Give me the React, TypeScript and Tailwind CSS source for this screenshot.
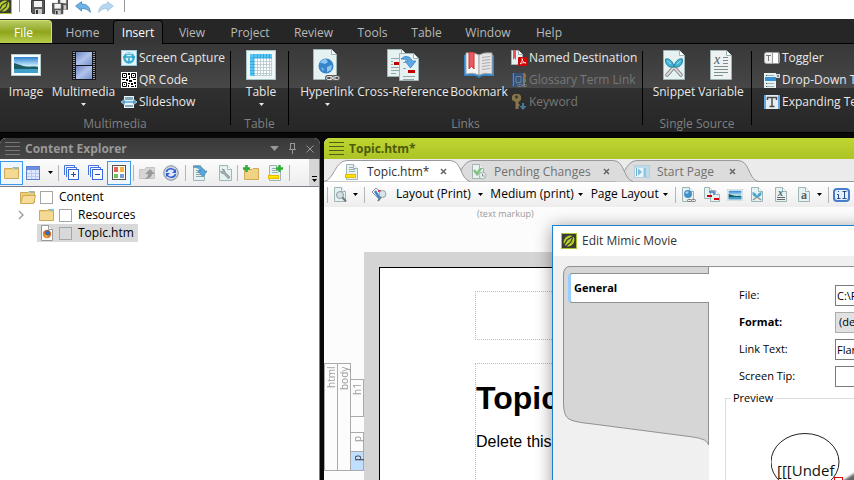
import React from "react";

type IconProps = { className?: string };

function Svg({ w, h, className = "", children }: { w: number; h: number; className?: string; children: React.ReactNode }) {
  return (
    <svg width={w} height={h} viewBox={`0 0 ${w} ${h}`} className={`shrink-0 ${className}`} aria-hidden="true">
      {children}
    </svg>
  );
}

/* ---------- shared shapes ---------- */

function Sheet({ w, h, fold = 4, fill = "#e6f1f1", stroke = "#9fb4b4" }: { w: number; h: number; fold?: number; fill?: string; stroke?: string }) {
  return (
    <>
      <path d={`M.5 .5H${w - fold - 0.5}L${w - 0.5} ${fold + 0.5}V${h - 0.5}H.5Z`} fill={fill} stroke={stroke} />
      <path d={`M${w - fold - 0.5} .5V${fold + 0.5}H${w - 0.5}`} fill="#fff" stroke={stroke} />
    </>
  );
}

function Caret({ className = "" }: IconProps) {
  return (
    <Svg w={7} h={4} className={className}>
      <path d="M0 0H7L3.500 4Z" fill="currentColor" />
    </Svg>
  );
}

function AppLogo({ className }: IconProps) {
  return (
    <Svg w={16} h={16} className={className}>
      <rect x=".5" y=".5" width="15" height="15" fill="#3c3c34" stroke="#a9c42c" />
      <ellipse cx="8" cy="8" rx="6" ry="4.800" transform="rotate(-45 8 8)" fill="#b6d02c" />
      <path d="M2 14L6 7L14 2" stroke="#3c3c34" strokeWidth="1.300" fill="none" />
      <path d="M4 14L10 9L11.500 4.500" stroke="#3c3c34" strokeWidth="1.200" fill="none" />
    </Svg>
  );
}

function Floppy() {
  return (
    <>
      <path d="M.5 .5H13.500V13.500H1.500L.5 12.500Z" fill="#5a5a5a" stroke="#383838" />
      <rect x="3" y="1" width="8" height="6" fill="#f1f1f1" />
      <rect x="4" y="9" width="7" height="5" fill="#c9c9c9" />
      <rect x="5" y="10" width="2" height="4" fill="#333" />
    </>
  );
}

const SaveIcon = () => <Svg w={14} h={14}><Floppy /></Svg>;
const SaveAllIcon = () => (
  <Svg w={16} h={16}>
    <g transform="translate(6 -2) scale(.75 .9)"><Floppy /></g>
    <g transform="translate(0 4) scale(.8)"><Floppy /></g>
  </Svg>
);
const UndoIcon = ({ className }: IconProps) => (
  <Svg w={16} h={12} className={className}>
    <path d="M.7 5L6.500 .7V3C12 3 15 6 15.300 11.400C13 8.500 10.500 7.500 6.500 7.500V10Z" fill="#6fb3e6" stroke="#3f83bd" strokeWidth=".8" />
  </Svg>
);
const RedoIcon = () => <UndoIcon className="-scale-x-100 opacity-50" />;

/* ---------- ribbon icons ---------- */

const PictureIcon = ({ w = 30, h = 22 }: { w?: number; h?: number }) => (
  <svg width={w} height={h} viewBox="0 0 30 22" aria-hidden="true" className="shrink-0">
    <defs>
      <linearGradient id="sky" x1="0" y1="0" x2="0" y2="1">
        <stop offset="0" stopColor="#2b7fd0" /><stop offset=".55" stopColor="#c8ecfa" /><stop offset="1" stopColor="#1766a8" />
      </linearGradient>
    </defs>
    <rect x=".5" y=".5" width="29" height="21" fill="#f8fcfc" stroke="#b4cccc" />
    <rect x="3" y="3" width="24" height="16" fill="url(#sky)" />
    <path d="M3 9C7 10 12 12 15 12.500C20 13 23 12 27 13V15H3Z" fill="#1d5c60" />
    <path d="M3 15H27V19H3Z" fill="#3fa0cc" />
  </svg>
);
const FilmIcon = () => (
  <Svg w={24} h={29}>
    <defs>
      <linearGradient id="film" x1="0" y1="0" x2="1" y2="1">
        <stop offset="0" stopColor="#6a86c4" /><stop offset=".5" stopColor="#b2c3ea" /><stop offset="1" stopColor="#7391d0" />
      </linearGradient>
    </defs>
    <rect width="24" height="29" fill="#15171c" />
    <rect x="4" y="1" width="16" height="13" fill="url(#film)" />
    <rect x="4" y="15" width="16" height="13" fill="url(#film)" />
    <path d="M2 1V29M22 1V29" stroke="#c5c5c5" strokeWidth="1.500" strokeDasharray="1 1" />
  </Svg>
);
const CaptureIcon = () => (
  <Svg w={16} h={16}>
    <rect x=".5" y=".5" width="15" height="15" fill="#e3f5fa" stroke="#9acbe0" />
    <circle cx="8" cy="8" r="4.500" fill="none" stroke="#39afd4" strokeWidth="2.500" />
    <path d="M2 7H14M8 8V12" stroke="#2aa0cb" strokeWidth="1.500" />
    <path d="M5 4Q8 2 11 4" stroke="#d1f0f8" fill="none" />
  </Svg>
);
const QrIcon = () => (
  <Svg w={16} h={16}>
    <rect width="16" height="16" fill="#fff" />
    <path d="M1.500 1.500H5.500V5.500H1.500ZM10.500 1.500H14.500V5.500H10.500ZM1.500 10.500H5.500V14.500H1.500Z" fill="none" stroke="#000" />
    <path d="M3 3h1v1H3zM12 3h1v1h-1zM3 12h1v1H3zM7 1h2v2H7zM8 4h1v3H8zM1 7h3v1H1zM5 7h2v2H5zM8 8h3v2H8zM12 7h3v1h-3zM7 11h2v1H7zM10 11h2v2h-2zM13 10h2v2h-2zM7 13h1v2H7zM10 14h3v1h-3zM14 13h1v2h-1z" fill="#000" />
  </Svg>
);
const SlideshowIcon = () => (
  <Svg w={16} h={12}>
    <rect x="3" y="0" width="10" height="12" fill="#eef6f8" />
    <path d="M4 1h8v3H4zM4 9h8v2H4z" fill="#81a8bb" />
    <path d="M0 6L4 3V5H12V3L16 6L12 9V7H4V9Z" fill="#4e9ad0" stroke="#d6eef8" strokeWidth=".7" />
  </Svg>
);
const TableIcon = () => (
  <Svg w={30} h={30}>
    <rect x=".5" y=".5" width="29" height="29" fill="#eef7f7" stroke="#a9c4c4" />
    <path d="M4 4H26V8H8V26H4Z" fill="#58c6f0" />
    <path d="M8 8H26V26H8Z" fill="#fff" />
    <path d="M11.500 8V26M14.500 8V26M17.500 8V26M20.500 8V26M23.500 8V26M25.500 8V26M8 11.500H26M8 14.500H26M8 17.500H26M8 20.500H26M8 23.500H26M8 25.500H26" stroke="#bdcfd4" />
    <path d="M4 8H26M8 4V26" stroke="#32abe0" />
    <path d="M11.500 4V8M14.500 4V8M17.500 4V8M20.500 4V8M23.500 4V8M4 11.500H8M4 14.500H8M4 17.500H8M4 20.500H8M4 23.500H8" stroke="#2fa8de" />
  </Svg>
);
const HyperlinkIcon = () => (
  <Svg w={28} h={32}>
    <Sheet w={24} h={31} fold={5} />
    <circle cx="13" cy="17" r="7.500" fill="#3784c9" />
    <path d="M7 14Q9 10 13 10L15 13L12 15L9 14ZM14 18L19 16L18 21L14 23ZM8 18L11 20L10 22Z" fill="#8cc8f0" />
    <g fill="none" stroke="#555" strokeWidth="3"><rect x="13.500" y="27.500" width="6" height="3" rx="1.500" /><rect x="20" y="27.500" width="6" height="3" rx="1.500" /></g>
    <g fill="none" stroke="#ddd"><rect x="13.500" y="27.500" width="6" height="3" rx="1.500" /><rect x="20" y="27.500" width="6" height="3" rx="1.500" /><path d="M17 29H23" /></g>
  </Svg>
);
const CrossRefIcon = () => (
  <Svg w={32} h={32}>
    <Sheet w={20} h={28} fold={5} />
    <path d="M4 9.500H15M4 12.500H6M4 15.500H6M4 18.500H16M4 21.500H16M4 24.500H9" stroke="#95a9ad" />
    <rect x="7" y="13" width="9" height="3" fill="#c00000" />
    <g transform="translate(12 4)"><Sheet w={20} h={28} fold={5} /><path d="M4 9.500H9M4 15.500H7M4 23.500H16M4 26.500H15" stroke="#95a9ad" /><rect x="9" y="17" width="7" height="3" fill="#c00000" /></g>
    <path d="M14 10Q17 6 22 8Q25 10 25 12H29L23.500 19L18 12H21Q21 10 14 10Z" fill="#5ca9e6" stroke="#347cba" strokeWidth=".7" />
  </Svg>
);
const BookIcon = () => (
  <Svg w={30} h={26}>
    <path d="M0 3H14L15 4L16 3H30V24H18L15 26L12 24H0Z" fill="#3684c8" />
    <path d="M2 1Q10 0 15 3V23Q9 20 2 22Z" fill="#f4f4f4" stroke="#aaa" />
    <path d="M28 1Q20 0 15 3V23Q21 20 28 22Z" fill="#e5e5e5" stroke="#aaa" />
    <path d="M18 5.500L26 4.500M18 8.500L26 7.500M18 11.500L26 10.500M18 14.500L26 13.500M18 17.500L26 16.500" stroke="#aaa" />
    <path d="M5 0H10V17L7.500 14L5 17Z" fill="#e85a60" stroke="#c7343b" />
  </Svg>
);
const NamedIcon = () => (
  <Svg w={16} h={16}>
    <Sheet w={12} h={15} />
    <path d="M2 0H5V10L3.500 8L2 10Z" fill="#e75257" />
    <rect x="7" y="7" width="9" height="9" rx="1" fill="#cf0505" />
    <path d="M9 14C11 12 12 9 11 8.500C11 11 13 13 15 13C13 12 11 13 9 14Z" fill="none" stroke="#fff" strokeWidth=".8" />
  </Svg>
);
const GlossaryIcon = () => (
  <Svg w={16} h={16} className="opacity-70">
    <rect x="2" y="1" width="12" height="13" fill="#99917a" />
    <rect x="11" y="2" width="4" height="4" fill="#c08035" /><rect x="11" y="7" width="4" height="3" fill="#78a26b" />
    <rect x="1" y="1" width="11" height="14" fill="#31598f" />
    <path d="M2.500 1V14M5 4.500H10V10.500H5Z" fill="none" stroke="#829cc3" />
    <g fill="none" stroke="#9a9a9a"><rect x="6.500" y="12.500" width="4" height="2" rx="1" /><rect x="11.500" y="12.500" width="4" height="2" rx="1" /></g>
  </Svg>
);
const KeyIcon = () => (
  <Svg w={16} h={16} className="opacity-75">
    <path d="M3 0H8L10 2V6L7.500 8V10H8.500V12H7.500V15H4.500V8L1 6V2Z" fill="#a68c55" />
    <circle cx="5.500" cy="3" r="1.400" fill="#343434" />
    <path d="M11 9H13V12H15.500L12 16L8.500 12H11Z" fill="#4a94c4" />
  </Svg>
);
const SnippetIcon = () => (
  <Svg w={22} h={30}>
    <Sheet w={22} h={30} fold={5} />
    <path d="M4 25L12 16M18 25L10 16" stroke="#777" strokeWidth="3.500" strokeLinecap="round" />
    <path d="M4 25L12 16M18 25L10 16" stroke="#d9d9d9" strokeWidth="2" strokeLinecap="round" />
    <path d="M11 17C6 18 2 15 2.500 9C6 8 10 11 11 17ZM11 17C16 18 20 15 19.500 9C16 8 12 11 11 17Z" fill="#41b5d9" stroke="#2b819b" />
    <path d="M4.500 11L8 14M17.500 11L14 14" stroke="#a5e2f2" />
  </Svg>
);
const VariableIcon = () => (
  <Svg w={22} h={30}>
    <Sheet w={22} h={30} fold={5} fill="#f0f1f1" />
    <path d="M4 16.500H18M4 19.500H18M4 22.500H18M4 25.500H13M13 7.500H18M13 10.500H18M13 13.500H18" stroke="#789090" />
    <text x="4" y="14" fontSize="14" fontStyle="italic" fontFamily="Liberation Serif, serif" fill="#496464">x</text>
  </Svg>
);
const TogglerIcon = () => (
  <Svg w={16} h={12}>
    <rect x=".5" y=".5" width="15" height="11" rx="2" fill="#f0f0f0" stroke="#aaa" />
    <rect x="8.500" y=".5" width="6" height="11" fill="#fff" stroke="#999" />
    <path d="M2 3.500H7M4.500 3V9" stroke="#777" />
  </Svg>
);
const DropDownIcon = () => (
  <Svg w={16} h={15}>
    <path d="M0 0H12V15H0Z" fill="#e8f0f2" />
    <path d="M1 4H12V8H1Z" fill="#3790d3" />
    <path d="M2 2.500H10M2 10.500H10M2 13.500H10" stroke="#9fb2b8" />
    <path d="M2 2.500H3M2 10.500H3M2 13.500H3" stroke="#3c5860" />
    <rect x="12" y="1" width="4" height="4" fill="#d5dfe1" /><path d="M13 2.500H15V3.500H13Z" fill="#435" />
  </Svg>
);
const ExpandIcon = () => (
  <Svg w={16} h={14}>
    <rect width="16" height="14" fill="#e6eef2" />
    <path d="M1 0V14M15 0V14" stroke="#5ea8e4" strokeWidth="2" />
    <path d="M3.500 5V2.500H12.500V5M8 3V12M5.500 11.500H10.500" fill="none" stroke="#4a4a4a" strokeWidth="1.500" />
  </Svg>
);

/* ---------- small toolbar icons ---------- */

const FolderIcon = ({ open = false }: { open?: boolean }) => (
  <Svg w={16} h={14}>
    <path d="M.5 2.500H8L9 1.500H14.500V12.500H.5Z" fill="#edcc73" stroke="#cfa95a" />
    <rect x="10" y="1" width="4" height="2" fill="#88bed4" />
    {open ? <path d="M3 5.500H15.500L13.500 13.500H.5Z" fill="#f6dd97" stroke="#cfa95a" /> : <rect x="1" y="4" width="13" height="8" fill="#f3d992" />}
  </Svg>
);
const GridIcon = () => (
  <Svg w={14} h={14}>
    <rect x=".5" y=".5" width="13" height="13" fill="#dfe8ff" stroke="#5f80cc" />
    <rect x="1" y="1" width="12" height="3" fill="#6d8fdf" />
    <path d="M5.500 4V13M9.500 4V13M1 7.500H13M1 10.500H13" stroke="#b9caf0" />
  </Svg>
);
const StackIcon = ({ plus = false }: { plus?: boolean }) => (
  <Svg w={15} h={15}>
    <path d="M.5 10V.5H10.500V2M2.500 12V2.500H12.500V4" fill="none" stroke="#4473e0" />
    <rect x="4.500" y="4.500" width="10" height="10" fill="#fff" stroke="#3367e0" />
    <path d={plus ? "M7 9.500H12M9.500 7V12" : "M7 9.500H12"} stroke="#254b9b" />
  </Svg>
);
const TilesIcon = () => (
  <Svg w={14} h={15}>
    <rect x=".5" y=".5" width="13" height="14" fill="#fffbe8" stroke="#515151" />
    <path d="M2 2h4v5H2z" fill="#e2605a" /><path d="M8 2h4v5H8z" fill="#efb347" /><path d="M2 9h4v4H2z" fill="#6cc05e" /><path d="M8 9h4v4H8z" fill="#6f9be0" />
  </Svg>
);
const MoveUpIcon = () => (
  <Svg w={17} h={14}>
    <path d="M.5 3.500H6L7 1.500H15.500V12.500H.5Z" fill="#d6d6d6" stroke="#c4c4c4" />
    <path d="M5 13Q9 12 9 8H6L11 3L16 8H13Q13 13 5 13Z" fill="#999" />
  </Svg>
);
const RefreshIcon = () => (
  <Svg w={16} h={16}>
    <circle cx="8" cy="8" r="7.300" fill="#c9ced8" stroke="#8a93a4" />
    <circle cx="8" cy="8" r="5.500" fill="#e2e8fa" />
    <path d="M3.500 7A4.500 4 0 0 1 12 6M12.500 9A4.500 4 0 0 1 4 10" fill="none" stroke="#2f5fd0" strokeWidth="1.500" />
    <path d="M13 4V8H9ZM3 12V8H7Z" fill="#2f5fd0" />
  </Svg>
);
const TextLines = () => <path d="M3 5.500H8M3 7.500H10M3 9.500H10M3 11.500H9" stroke="#8da5a5" />;
const OpenDocIcon = () => (
  <Svg w={15} h={16}>
    <Sheet w={12} h={16} /><TextLines />
    <path d="M0 2Q8 -1 11 6H14L10 12L5 6H8Q6 2 0 2Z" fill="#57a8dd" stroke="#3179b1" strokeWidth=".6" />
  </Svg>
);
const WrenchIcon = () => (
  <Svg w={13} h={16}>
    <Sheet w={13} h={16} />
    <path d="M3 4Q6 4 6 7L11 12L9.500 14L5 9Q2 9 1.500 6L3 7L4.500 6Z" fill="#a4acad" stroke="#788485" strokeWidth=".6" />
  </Svg>
);
const Plus = ({ x, y }: { x: number; y: number }) => <path d={`M${x + 3.5} ${y}V${y + 7}M${x} ${y + 3.5}H${x + 7}`} stroke="#2fae35" strokeWidth="2.500" />;
const NewFolderIcon = () => (
  <Svg w={17} h={16}><g transform="translate(1 2)"><path d="M.5 2.500H8L9 1.500H14.500V12.500H.5Z" fill="#f0d484" stroke="#cfa95a" /></g><Plus x={0} y={0} /></Svg>
);
const YellowDocIcon = ({ plus = false }: { plus?: boolean }) => (
  <Svg w={15} h={16}>
    <g transform="translate(1 0)"><Sheet w={12} h={16} /><path d="M3 3.500H7M3 5.500H9M3 7.500H9" stroke="#9ab0b0" /></g>
    <rect x=".5" y="10.500" width="10" height="3" fill="#ffe600" stroke="#efb800" />
    {plus && <Plus x={8} y={0} />}
  </Svg>
);
const FirefoxDocIcon = () => (
  <Svg w={12} h={16}>
    <Sheet w={12} h={16} fill="#fff" stroke="#999" />
    <circle cx="6" cy="9" r="4.200" fill="#e06b22" /><circle cx="6.500" cy="8" r="2.500" fill="#316db4" /><path d="M2 8L5 10L8 11L5 13Z" fill="#f2ac27" />
  </Svg>
);
const PreviewIcon = () => (
  <Svg w={13} h={16}><Sheet w={12} h={15} /><circle cx="6" cy="8" r="3.500" fill="#d5dfe5" stroke="#8799a2" /><path d="M8.500 10.500L12 14.500" stroke="#727b80" strokeWidth="2" /></Svg>
);
const LinkSheetIcon = () => (
  <Svg w={14} h={16}><Sheet w={12} h={15} /><circle cx="6" cy="7" r="4" fill="#438fc6" /><path d="M3 6Q5 3 7 5L5 7Z" fill="#a0d5f1" /><g fill="#eee" stroke="#777"><rect x="5.500" y="12.500" width="4" height="2" rx="1" /><rect x="9.500" y="12.500" width="4" height="2" rx="1" /></g></Svg>
);
const XrefSmallIcon = () => (
  <Svg w={16} h={15}><Sheet w={10} h={12} /><g transform="translate(6 3)"><Sheet w={10} h={12} /></g><path d="M3 8h5v2H3zM10 11h5v2h-5z" fill="#d1000b" /><path d="M5 5H10V8" fill="none" stroke="#3b75c5" strokeWidth="1.500" /></Svg>
);
const SnippetSmallIcon = () => (
  <Svg w={13} h={15}><Sheet w={12} h={15} /><path d="M2 13L10 7M10 13L2 7" stroke="#8b9396" strokeWidth="1.500" /><path d="M6 10Q1 10 1.500 5Q6 6 6 10Q6 6 10.500 5Q11 10 6 10Z" fill="#46a9cb" /></Svg>
);
const LetterIcon = ({ letter, lines = false }: { letter: string; lines?: boolean }) => (
  <Svg w={12} h={15}>
    <Sheet w={12} h={15} />
    <text x="3" y={lines ? 9 : 12} fontSize={lines ? 10 : 12} fontWeight="bold" fontStyle={lines ? "italic" : "normal"} fontFamily="Liberation Serif, serif" fill="#4c5b5e">{letter}</text>
    {lines && <path d="M2 10.500H10M2 12.500H10" stroke="#666" />}
  </Svg>
);
const PendingIcon = () => (
  <Svg w={15} h={16}><Sheet w={12} h={15} fill="#edf3f2" /><path d="M2 6L5 10L9 4" fill="none" stroke="#82c184" strokeWidth="2.500" /><circle cx="10.500" cy="11.500" r="3.500" fill="#e3ecea" stroke="#a6b3af" /><path d="M10.500 9.500V12H12.500" stroke="#899" fill="none" /></Svg>
);
const StartIcon = () => (
  <Svg w={16} h={13}><rect x=".5" y=".5" width="15" height="12" fill="#bddbe9" stroke="#b5cfdc" /><rect x="1" y="3" width="8" height="9" fill="#e7f4f8" /><path d="M2.500 3V11" stroke="#69aed0" /><path d="M4 3.500L8 7L4 10.500Z" fill="#7dbbd9" /><path d="M11 3V12" stroke="#90c5dd" strokeWidth="2" /></Svg>
);
const MarkerIcon = () => (
  <Svg w={17} h={14}><rect x="1" y="1" width="15" height="12" rx="3" fill="#e6effd" stroke="#4a7ccc" strokeWidth="2" /><path d="M5.500 3V4M4 6.500H5.500V10.500M4 10.500H7.500M9.500 3.500H13.500M11.500 3.500V10.500M9.500 10.500H13.500" stroke="#274b8f" fill="none" /></Svg>
);
const StyleIcon = () => (
  <Svg w={16} h={15}><path d="M1 5L5 1L12 7L7 11Z" fill="#f3f6f9" stroke="#8798a8" /><path d="M4 4L9 12" stroke="#3f86cc" strokeWidth="2.500" /><path d="M7 3H10V5H7Z" fill="#d7323a" /><circle cx="11.500" cy="7" r="3.500" fill="#d9e5ed" stroke="#91a5b0" /><path d="M10 10L7 14" stroke="#717f87" strokeWidth="2" /></Svg>
);
const Grip = ({ color }: { color: string }) => (
  <Svg w={15} h={14}><path d="M0 .5H15M0 4.500H15M0 8.500H15M0 12.500H15" stroke={color} /></Svg>
);

/* ---------- ribbon ---------- */

const ribbonTabs = [
  { name: "Home", width: "w-[61px]" },
  { name: "Insert", width: "w-[50px]" },
  { name: "View", width: "w-[58px]" },
  { name: "Project", width: "w-[58px]" },
  { name: "Review", width: "w-[69px]" },
  { name: "Tools", width: "w-[49px]" },
  { name: "Table", width: "w-[59px]" },
  { name: "Window", width: "w-[64px]" },
  { name: "Help", width: "w-[58px]" },
];

function BigButton({ label, icon, width, menu = false }: { label: string; icon: React.ReactNode; width: string; menu?: boolean }) {
  return (
    <button className={`flex shrink-0 flex-col items-center ${width}`}>
      <span className="flex h-9 items-center justify-center">{icon}</span>
      <span className="h-5 whitespace-nowrap pt-px leading-4">{label}</span>
      {menu && <Caret className="h-[3px] w-[5px]" />}
    </button>
  );
}

function SmallButton({ label, icon, disabled = false }: { label: string; icon: React.ReactNode; disabled?: boolean }) {
  return (
    <button disabled={disabled} className={`flex h-[22px] items-center gap-0.5 whitespace-nowrap ${disabled ? "text-[#777]" : ""}`}>
      {icon}{label}
    </button>
  );
}

function Group({ name, width, children }: { name: string; width: string; children: React.ReactNode }) {
  return (
    <section className={`flex shrink-0 flex-col pt-[3px] ${width}`}>
      <div className="flex h-[69px]">{children}</div>
      <div className="text-center leading-4 text-[#808080]">{name}</div>
    </section>
  );
}

const Divider = () => <div className="my-[7px] w-px shrink-0 bg-black" />;

function Ribbon() {
  return (
    <header className="shrink-0">
      <div className="flex h-[19px] items-start bg-white">
        <AppLogo className="-ml-1 -mt-0.5" />
        <span className="ml-[7px] h-3 w-px bg-[#999]" />
        <div className="ml-[11px] flex h-[14px] items-center gap-[7px]">
          <button aria-label="Save"><SaveIcon /></button>
          <button aria-label="Save all"><SaveAllIcon /></button>
          <button aria-label="Undo"><UndoIcon /></button>
          <button aria-label="Redo"><RedoIcon /></button>
        </div>
        <span className="ml-[10px] h-3 w-px bg-[#999]" />
      </div>
      <nav className="flex h-[25px] border-b border-black bg-[#262626] pt-px text-[#b8b8b8]">
        <button className="w-[52px] rounded-tr-sm border-r border-t border-[#d0e26f] bg-linear-to-b from-[#b9cc61] via-[#8fa51a] to-[#b9cf4c] pr-1 pt-px text-white">File</button>
        {ribbonTabs.map((t) => (
          <button key={t.name} className={`${t.width} ${t.name === "Insert" ? "-mb-px rounded-t-sm border-x border-t border-black bg-[#363636] text-white" : "pt-0.5"}`}>{t.name}</button>
        ))}
      </nav>
      <div className="flex h-[89px] border-b border-black bg-[linear-gradient(#383838_0,#474747_50%,#303030_50%,#262626_100%)] text-[#e8e8e8]">
        <Group name="Multimedia" width="w-[230px]">
          <BigButton label="Image" icon={<PictureIcon />} width="w-[52px]" />
          <BigButton label="Multimedia" icon={<FilmIcon />} width="w-[63px]" menu />
          <div className="ml-1.5">
            <SmallButton label="Screen Capture" icon={<CaptureIcon />} />
            <SmallButton label="QR Code" icon={<QrIcon />} />
            <SmallButton label="Slideshow" icon={<SlideshowIcon />} />
          </div>
        </Group>
        <Divider />
        <Group name="Table" width="w-[57px]">
          <BigButton label="Table" icon={<TableIcon />} width="w-[60px]" menu />
        </Group>
        <Divider />
        <Group name="Links" width="w-[353px]">
          <BigButton label="Hyperlink" icon={<HyperlinkIcon />} width="ml-2 w-[60px]" menu />
          <BigButton label="Cross-Reference" icon={<CrossRefIcon />} width="w-[92px]" />
          <BigButton label="Bookmark" icon={<BookIcon />} width="w-[60px]" />
          <div className="ml-0.5">
            <SmallButton label="Named Destination" icon={<NamedIcon />} />
            <SmallButton label="Glossary Term Link" icon={<GlossaryIcon />} disabled />
            <SmallButton label="Keyword" icon={<KeyIcon />} disabled />
          </div>
        </Group>
        <Divider />
        <Group name="Single Source" width="w-[108px]">
          <BigButton label="Snippet" icon={<SnippetIcon />} width="ml-2 w-[46px]" />
          <BigButton label="Variable" icon={<VariableIcon />} width="w-[48px]" />
        </Group>
        <Divider />
        <div className="ml-3 w-20 grow overflow-hidden pt-[3px]">
          <SmallButton label="Toggler" icon={<TogglerIcon />} />
          <SmallButton label="Drop-Down Text" icon={<DropDownIcon />} />
          <SmallButton label="Expanding Text" icon={<ExpandIcon />} />
        </div>
      </div>
    </header>
  );
}

/* ---------- content explorer ---------- */

function Tool({ label, width, active = false, children }: { label: string; width: string; active?: boolean; children: React.ReactNode }) {
  return (
    <button aria-label={label} className={`flex h-6 shrink-0 items-center justify-center ${width} ${active ? "border border-[#3c98ec] bg-[#eef6fe]" : ""}`}>
      {children}
    </button>
  );
}
const Sep = () => <span className="h-4 w-px shrink-0 bg-[#b5b5b5]" />;

function TreeRow({ label, icon, indent, expandable = false, selected = false }: { label: string; icon: React.ReactNode; indent: string; expandable?: boolean; selected?: boolean }) {
  return (
    <li className={`flex h-[18px] items-center ${indent}`}>
      {expandable && <svg width="6" height="10" viewBox="0 0 6 10" className="mr-[13px]" aria-hidden="true"><path d="M1 1L5 5L1 9" fill="none" stroke="#a0a0a0" strokeWidth="1.500" /></svg>}
      <label className={`flex h-[18px] items-center pr-1 ${selected ? "bg-[#d9d9d9]" : ""}`}>
        <span className="flex w-5 items-center justify-center">{icon}</span>
        <input type="checkbox" className="ml-0.5 mr-1.5 size-[13px] appearance-none border border-[#a6a6a6]" />
        {label}
      </label>
    </li>
  );
}

function Explorer() {
  return (
    <aside className="flex w-80 shrink-0 flex-col overflow-hidden rounded-t-md bg-white">
      <div className="flex h-[21px] shrink-0 items-center bg-linear-to-b from-[#383838] to-[#474747] pl-[5px] pr-1.5 text-[#999]">
        <Grip color="#777" />
        <h2 className="ml-[5px] grow font-bold">Content Explorer</h2>
        <button aria-label="Panel menu" className="mr-2.5"><Caret className="h-[5px] w-[9px]" /></button>
        <button aria-label="Pin panel" className="mr-2.5"><Svg w={7} h={11}><path d="M1.500 0V6M5.500 0V6M1 .5H6M0 6.500H7M3.500 7V11" stroke="currentColor" fill="none" /></Svg></button>
        <button aria-label="Close panel"><Svg w={8} h={8}><path d="M.5 .5L7.500 7.500M7.500 .5L.5 7.500" stroke="currentColor" /></Svg></button>
      </div>
      <div className="flex h-7 shrink-0 items-center border-b border-r border-[#7b808c] bg-linear-to-b from-[#fcfcfc] to-[#ededed]">
        <Tool label="Folder view" width="w-[23px]" active><FolderIcon /></Tool>
        <Tool label="Grid" width="w-5"><GridIcon /></Tool>
        <Tool label="Grid options" width="w-[15px]"><Caret className="h-[3px] w-[5px]" /></Tool>
        <Sep />
        <Tool label="Expand all" width="w-[25px]"><StackIcon plus /></Tool>
        <Tool label="Collapse all" width="w-[23px]"><StackIcon /></Tool>
        <Tool label="Show all files" width="w-6" active><TilesIcon /></Tool>
        <span className="w-[2px]" /><Sep />
        <Tool label="Move up" width="w-[27px]"><MoveUpIcon /></Tool>
        <Tool label="Refresh" width="w-[19px]"><RefreshIcon /></Tool>
        <span className="w-[5px]" /><Sep />
        <Tool label="Open" width="w-7"><OpenDocIcon /></Tool>
        <Tool label="Properties" width="w-[23px]"><WrenchIcon /></Tool>
        <Sep />
        <Tool label="New folder" width="w-[27px]"><NewFolderIcon /></Tool>
        <Tool label="New topic" width="w-5"><YellowDocIcon plus /></Tool>
        <span className="w-[4px]" /><Sep />
        <button aria-label="More tools" className="ml-auto flex h-full w-[10px] flex-col items-center justify-end gap-0.5 bg-[#d6d6d6] pb-1">
          <span className="h-px w-[5px] bg-black" /><Caret className="h-[3px] w-[5px]" />
        </button>
      </div>
      <ul className="grow border-r border-[#7b808c] pt-[1px]">
        <TreeRow label="Content" icon={<FolderIcon open />} indent="pl-[18px]" />
        <TreeRow label="Resources" icon={<FolderIcon />} indent="pl-[18px]" expandable />
        <TreeRow label="Topic.htm" icon={<FirefoxDocIcon />} indent="pl-[37px]" selected />
      </ul>
    </aside>
  );
}

/* ---------- editor ---------- */

function DocTab({ label, icon, w, active = false, place }: { label: string; icon: React.ReactNode; w: number; active?: boolean; place: string }) {
  return (
    <div className={`relative flex h-[23px] shrink-0 items-center pt-0.5 ${place} ${active ? "text-[#303030]" : "text-[#707070]"}`}>
      <svg width={w} height="23" viewBox={`0 0 ${w} 23`} className="absolute inset-0" aria-hidden="true">
        <path d={`M0 22.500C10 21 11 1.500 23 1.500H${w - 20}C${w - 8} 1.500 ${w - 10} 20 ${w} 22.500`} fill={active ? "#fff" : "#dcdcdc"} stroke="#999" />
      </svg>
      <button className="relative flex grow items-center gap-[7px] whitespace-nowrap">{icon}{label}</button>
      <button aria-label={`Close ${label}`} className="relative">
        <Svg w={7} h={7}><path d="M1 1L6 6M6 1L1 6" stroke="#666" strokeWidth="1.500" /></Svg>
      </button>
    </div>
  );
}

function Picker({ label, width, value }: { label: string; width: string; value: string }) {
  return (
    <span className={`flex shrink-0 items-center justify-between ${width}`}>
      <select aria-label={label} className="min-w-0 grow appearance-none overflow-visible whitespace-nowrap bg-transparent pb-px text-black"><option>{value}</option></select>
      <Caret className="h-[3px] w-[5px]" />
    </span>
  );
}

function TagBar({ name, place }: { name: string; place: string }) {
  return <div className={`flex w-[14px] items-center justify-end border border-[#aaa] pb-[3px] text-[10px] leading-3 [writing-mode:vertical-rl] rotate-180 ${place}`}>{name}</div>;
}

function Editor() {
  return (
    <main className="flex min-w-0 grow flex-col overflow-hidden rounded-tl-md bg-[#fcfcfc]">
      <div className="flex h-[21px] shrink-0 items-center bg-linear-to-b from-[#bfd630] to-[#adc326] pl-[5px] font-bold text-[#4c5b0b]">
        <Grip color="#4f6010" /><span className="ml-[5px]">Topic.htm*</span>
      </div>
      <div className="flex h-[23px] shrink-0 bg-[#ebebeb] shadow-[inset_0_-1px_0_#999]">
        <DocTab label="Topic.htm*" icon={<YellowDocIcon />} w={146} active place="z-30 w-[146px] pl-[21px] pr-[23px]" />
        <DocTab label="Pending Changes" icon={<PendingIcon />} w={183} place="z-20 -ml-5 w-[183px] pl-[22px] pr-[23px]" />
        <DocTab label="Start Page" icon={<StartIcon />} w={144} place="z-10 -ml-[19px] w-[144px] pl-5 pr-[22px]" />
      </div>
      <div className="flex h-[25px] shrink-0 items-center bg-linear-to-b from-white to-[#ededed] pl-[3px] text-black">
        <Sep />
        <Tool label="Preview" width="w-[25px]"><PreviewIcon /></Tool>
        <Caret className="h-[3px] w-[5px]" />
        <span className="w-[7px]" /><Sep />
        <Tool label="Styles" width="w-[27px]"><StyleIcon /></Tool>
        <span className="w-1" />
        <Picker label="Layout" width="w-[87px]" value="Layout (Print)" />
        <span className="w-2" />
        <Picker label="Medium" width="w-[93px]" value="Medium (print)" />
        <span className="w-2" />
        <Picker label="Page" width="w-[77px]" value="Page Layout" />
        <span className="w-2" /><Sep />
        <Tool label="Insert hyperlink" width="w-[27px]"><LinkSheetIcon /></Tool>
        <Tool label="Insert cross-reference" width="w-[18px]"><XrefSmallIcon /></Tool>
        <Tool label="Insert picture" width="w-[28px]"><PictureIcon w={16} h={12} /></Tool>
        <Tool label="Insert snippet" width="w-[18px]"><SnippetSmallIcon /></Tool>
        <Tool label="Insert variable" width="w-[28px]"><LetterIcon letter="x" lines /></Tool>
        <Tool label="Insert character" width="w-[18px]"><LetterIcon letter="a" /></Tool>
        <span className="w-1" /><Caret className="h-[3px] w-[5px]" />
        <span className="w-[7px]" /><Sep />
        <Tool label="Markers" width="w-[25px]"><MarkerIcon /></Tool>
      </div>
      <div className="flex min-h-0 grow">
        <div className="flex w-10 shrink-0 pt-[156px] text-[#999]">
          <TagBar name="html" place="h-[108px]" />
          <TagBar name="body" place="-ml-px h-[108px]" />
          <div className="-ml-px pt-4">
            <TagBar name="h1" place="h-[38px]" />
            <TagBar name="p" place="mt-[15px] h-[20px]" />
            <TagBar name="p" place="-mt-px h-[20px] bg-[#c2deff] text-[#333]" />
          </div>
        </div>
        <div className="flex min-w-0 grow flex-col">
          <div className="h-[45px] shrink-0 pl-[113px] text-[9px] leading-[14px] text-[#999]">(text markup)</div>
          <div className="flex grow flex-col bg-[#d4d4d4] pl-[15px] pt-[15px]">
            <article className="grow border-l border-t border-black bg-white pl-[95px] pt-[23px] font-['Liberation_Sans',Arial,sans-serif] text-black">
              <div className="h-[49px] border border-dotted border-[#bbb]" />
              <div className="mt-[23px] h-40 whitespace-nowrap border border-dotted border-[#bbb]">
                <h1 className="pt-4 text-[32px] font-bold leading-9">Topic Title</h1>
                <p className="mt-4 text-base leading-5">Delete this text and replace it with your own content.</p>
              </div>
            </article>
          </div>
        </div>
      </div>
    </main>
  );
}

/* ---------- dialog ---------- */

function Field({ id, label, children }: { id: string; label: React.ReactNode; children: React.ReactNode }) {
  return (
    <div className="flex h-[27px] items-center">
      <label htmlFor={id} className="w-24 shrink-0">{label}</label>
      {children}
    </div>
  );
}

function MimicDialog() {
  const box = "h-[21px] grow border border-[#7a7a7a] px-px text-black";
  return (
    <div role="dialog" aria-label="Edit Mimic Movie" className="absolute -right-60 left-[552px] top-[225px] z-40 flex h-[420px] flex-col border border-[#1b80cd] bg-[#f0f0f0] text-black shadow-[0_2px_16px_rgba(0,0,0,0.4)]">
      <div className="flex h-[30px] shrink-0 items-center bg-white pl-2">
        <AppLogo /><span className="ml-[5px] text-xs text-[#333]">Edit Mimic Movie</span>
      </div>
      <div className="flex grow pl-2.5 pt-2.5 text-[11px]">
        <div className="relative w-[146px] shrink-0 pl-[5px] pt-[7px]">
          <svg width="146" height="179" viewBox="0 0 146 179" className="absolute left-0 top-0" aria-hidden="true">
            <path d="M146 .5H7Q.5 .5 .5 9V137Q.5 150 6 153Q10 156 30 158L130 171Q145 173 145.500 179V.5" fill="#d6d6d6" stroke="#919191" />
          </svg>
          <button className="relative flex h-[30px] w-full items-center rounded-l-sm border-y border-l-[3px] border-y-[#919191] border-l-[#99ccff] bg-white pl-[3px] pt-px font-bold">General</button>
        </div>
        <div className="flex grow flex-col border-t border-[#919191] bg-white pl-4 pt-[15px]">
          <form className="pl-[14px]">
            <Field id="file" label="File:"><input id="file" className={box} defaultValue="C:\Projects\Movie.mcmv" /></Field>
            <Field id="format" label={<b>Format:</b>}>
              <select id="format" className="h-[21px] grow appearance-none border border-[#adadad] bg-[#e1e1e1] px-[3px]"><option>(default)</option></select>
            </Field>
            <Field id="link" label="Link Text:"><input id="link" className={box} defaultValue="Flare Movie" /></Field>
            <Field id="tip" label="Screen Tip:"><input id="tip" className={box} /></Field>
          </form>
          <fieldset className="h-60 border border-[#dcdcdc] pl-[45px]">
            <legend className="-ml-10 px-0.5 leading-4">Preview</legend>
            <svg width="130" height="100" viewBox="0 0 130 100" className="mt-[27px]" role="img" aria-label="Movie preview">
              <defs><filter id="soft"><feGaussianBlur stdDeviation="1.2" /></filter></defs>
              <path d="M62 54L90 36V52L70 62Z" fill="#666" filter="url(#soft)" />
              <ellipse cx="34" cy="29" rx="34" ry="28.500" fill="#fff" stroke="#222" />
              <text x="6" y="43" fontSize="15" fontFamily="'Open Sans', sans-serif" fill="#111">[[[Undef</text>
              <rect x="63.500" y="44.500" width="8" height="8" fill="#fff" stroke="#e00" />
            </svg>
          </fieldset>
        </div>
      </div>
    </div>
  );
}

export default function App() {
  return (
    <div className="relative flex h-screen w-full flex-col overflow-hidden bg-[#080808] font-['Open_Sans','Noto_Sans',sans-serif] text-xs text-black">
      <Ribbon />
      <div className="mt-[5px] flex min-h-0 grow gap-1">
        <Explorer />
        <Editor />
      </div>
      <MimicDialog />
    </div>
  );
}
